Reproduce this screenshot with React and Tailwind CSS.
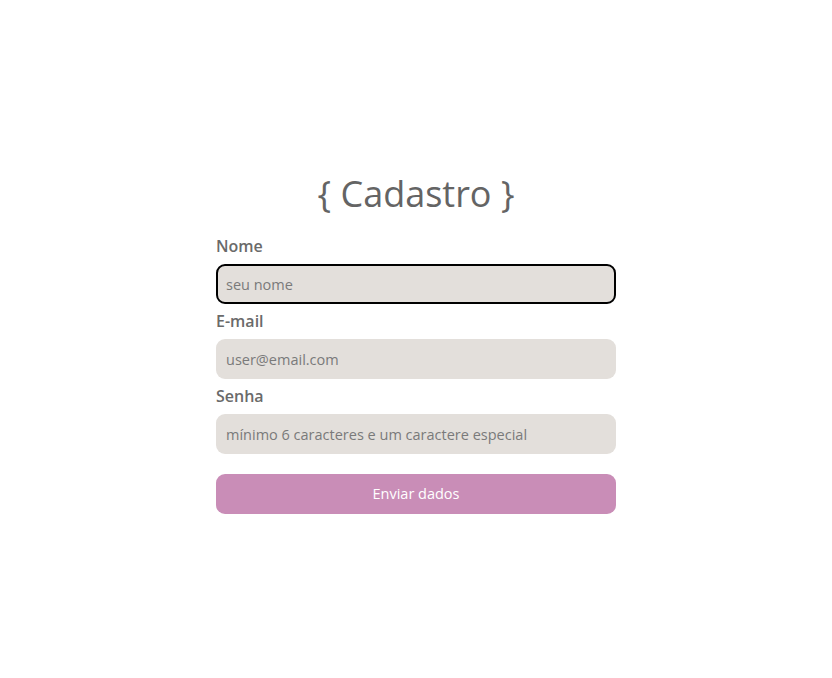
export default function App() {
  return (
    <div className="min-h-screen bg-white flex justify-center pt-[174px] [font-family:'Open_Sans','Noto_Sans',sans-serif]">
      <div className="w-[400px] flex flex-col">
        <h1 className="text-center text-[36px] leading-[40px] font-normal text-[#646464] mb-[20px]">
          {"{ Cadastro }"}
        </h1>
        <form className="flex flex-col" onSubmit={(e) => e.preventDefault()}>
          <label className="h-6 leading-6 text-[16px] font-semibold text-[#6a6a6a] mb-1.5">Nome</label>
          <input
            autoFocus
            type="text"
            placeholder="seu nome"
            className="h-10 w-full rounded-[9px] bg-[#e3dfdb] border-2 border-black px-[8px] text-[14.5px] text-[#555] placeholder:text-[#7a7a7a] outline-none"
          />
          <label className="mt-[5px] h-6 leading-6 text-[16px] font-semibold text-[#6a6a6a] mb-1.5">E-mail</label>
          <input
            type="email"
            placeholder="user@email.com"
            className="h-10 w-full rounded-[9px] bg-[#e3dfdb] px-[10px] text-[14.5px] text-[#555] placeholder:text-[#7a7a7a] outline-none"
          />
          <label className="mt-[5px] h-6 leading-6 text-[16px] font-semibold text-[#6a6a6a] mb-1.5">Senha</label>
          <input
            type="password"
            placeholder="mínimo 6 caracteres e um caractere especial"
            className="h-10 w-full rounded-[9px] bg-[#e3dfdb] px-[10px] text-[14.5px] text-[#555] placeholder:text-[#7a7a7a] outline-none"
          />
          <button
            type="submit"
            className="mt-5 h-10 w-full rounded-[9px] bg-[#c98db7] text-white text-[14.5px] font-medium"
          >
            Enviar dados
          </button>
        </form>
      </div>
    </div>
  );
}
